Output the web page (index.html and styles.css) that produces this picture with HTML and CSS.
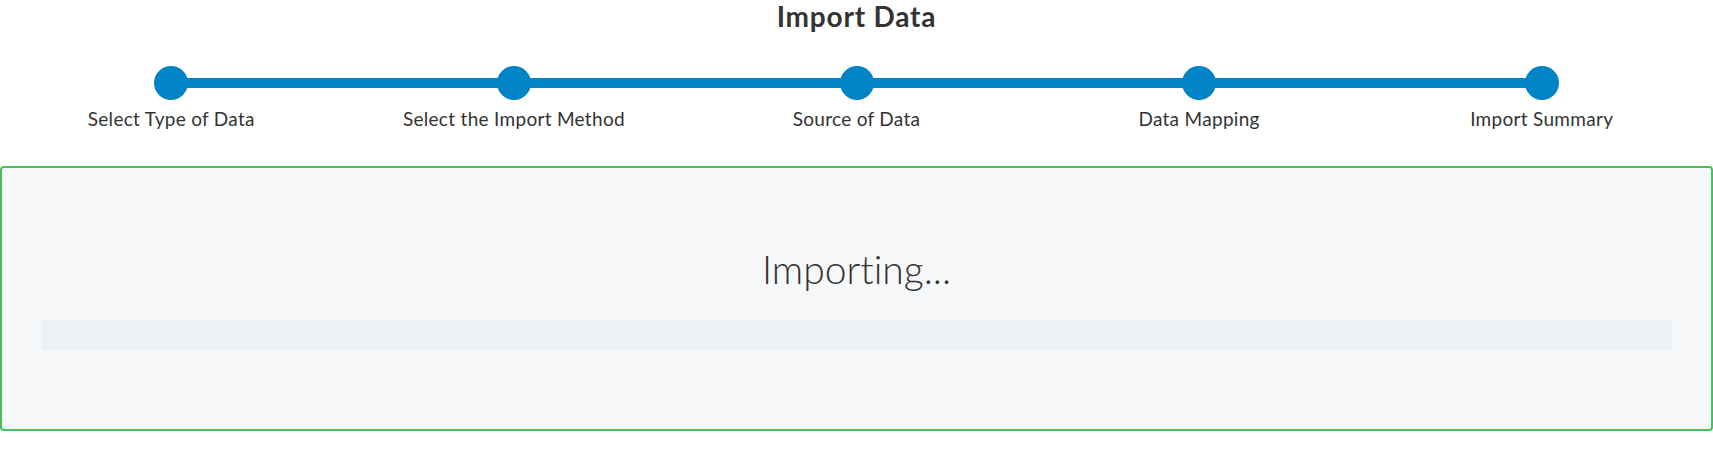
FILE: index.html
```html
<!DOCTYPE html>
<html lang="en">
<head>
<meta charset="utf-8">
<title>Import Data</title>
<link rel="stylesheet" href="styles.css">
</head>
<body>
<div class="page">
  <h1 class="title">Import Data</h1>
  <ol class="stepper">
    <li class="step step-first">
      <div class="track"><span class="seg"></span><span class="dot"></span><span class="seg"></span></div>
      <span class="label">Select Type of Data</span>
    </li>
    <li class="step">
      <div class="track"><span class="seg"></span><span class="dot"></span><span class="seg"></span></div>
      <span class="label">Select the Import Method</span>
    </li>
    <li class="step">
      <div class="track"><span class="seg"></span><span class="dot"></span><span class="seg"></span></div>
      <span class="label">Source of Data</span>
    </li>
    <li class="step">
      <div class="track"><span class="seg"></span><span class="dot"></span><span class="seg"></span></div>
      <span class="label">Data Mapping</span>
    </li>
    <li class="step step-last">
      <div class="track"><span class="seg"></span><span class="dot"></span><span class="seg"></span></div>
      <span class="label">Import Summary</span>
    </li>
  </ol>
  <section class="panel">
    <h2 class="status">Importing...</h2>
    <div class="progress"><div class="progress-fill" style="width:0%"></div></div>
  </section>
</div>
</body>
</html>
```

FILE: styles.css
```css
* { box-sizing: border-box; }
html, body { margin: 0; padding: 0; background: #ffffff; }
body {
  font-family: Lato, "Open Sans", "Liberation Sans", sans-serif;
  color: #333333;
  width: 1713px;
  font-variant-ligatures: none;
}
.page { display: flex; flex-direction: column; }
.title {
  margin: 0;
  text-align: center;
  font-size: 28px;
  line-height: 32px;
  font-weight: 700;
  letter-spacing: 0.8px;
  color: #333333;
}
.stepper {
  list-style: none;
  margin: 34px 0 0;
  padding: 0;
  display: grid;
  grid-template-columns: repeat(5, 1fr);
}
.step {
  display: flex;
  flex-direction: column;
  align-items: center;
  gap: 7px;
}
.track {
  width: 100%;
  display: flex;
  align-items: center;
  height: 34px;
}
.seg {
  flex: 1;
  height: 10px;
  background: #0084c7;
}
.step-first .seg:first-child,
.step-last .seg:last-child { background: transparent; }
.dot {
  width: 34px;
  height: 34px;
  border-radius: 50%;
  background: #0084c7;
  flex: none;
  margin: 0 -2px;
  position: relative;
  z-index: 1;
}
.label {
  font-size: 19px;
  line-height: 23px;
  letter-spacing: 0.3px;
  color: #333333;
  white-space: nowrap;
}
.panel {
  margin-top: 36px;
  border: 2px solid #46c05a;
  border-radius: 4px;
  background: #f7f8fa;
  padding: 78px 39px 79px;
  display: flex;
  flex-direction: column;
  height: 265px;
}
.status {
  margin: 0 0 27px;
  text-align: center;
  font-size: 39px;
  line-height: 47px;
  font-weight: 300;
  color: #333333;
}
.progress {
  height: 30px;
  border-radius: 4px;
  background: #ecf1f5;
  overflow: hidden;
}
.progress-fill { height: 100%; background: #0084c7; }
```
